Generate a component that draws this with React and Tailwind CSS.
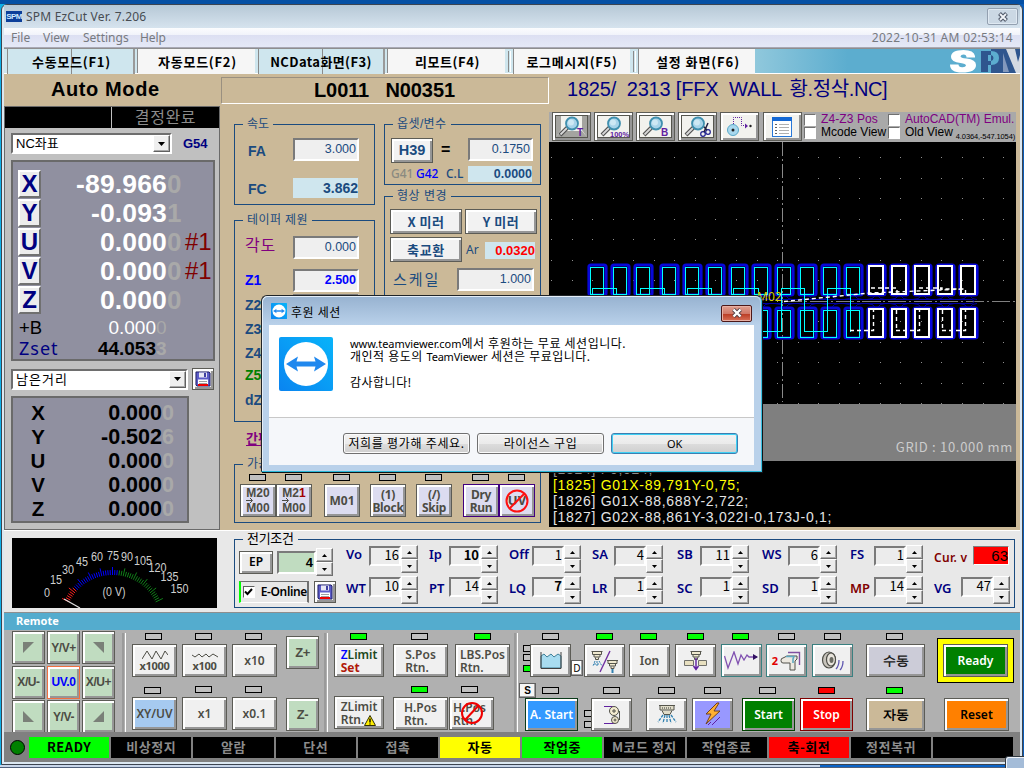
import React from "react";
import { clsx } from "clsx";
import { twMerge } from "tailwind-merge";

const Btn = ({ className, children }) => (
  <div
    className={twMerge(
      "flex shrink-0 items-center justify-center whitespace-nowrap border border-[#5c5c56] shadow-[inset_2px_2px_0_#ffffff,inset_-2px_-2px_0_#969696]",
      className
    )}
  >
    {children}
  </div>
);

const Field = ({ className, children }) => (
  <div
    className={clsx(
      "shrink-0 whitespace-nowrap border-2 border-b-white border-l-[#7a7a7a] border-r-white border-t-[#7a7a7a] text-right",
      className
    )}
  >
    {children}
  </div>
);

const Led = ({ className, on, red }) => (
  <div
    className={clsx(
      "h-[7px] w-[17px] shrink-0 border border-black",
      on ? "bg-[#00ff00]" : red ? "bg-[#ff0000]" : "bg-[#c0c0c0]",
      className
    )}
  />
);

const Group = ({ title, className, legend = "text-[12px]", children }) => (
  <fieldset className={clsx("min-w-0 shrink-0 border border-[#1b4b7f]", className)}>
    <legend className={clsx("ml-2 h-[14px] whitespace-nowrap px-1 leading-[14px]", legend)}>{title}</legend>
    {children}
  </fieldset>
);

const Arrow = ({ up }) => (
  <svg width="5" height="3" viewBox="0 0 5 3">
    <path d={up ? "M0 3L2.5 0L5 3Z" : "M0 0L2.5 3L5 0Z"} fill="#000" />
  </svg>
);

const Spin = () => (
  <div className="flex w-[17px] shrink-0 flex-col">
    <div className="flex h-[14px] items-center justify-center border border-b-[#707070] border-l-white border-r-[#707070] border-t-white bg-[#ececec] shadow-[inset_-1px_-1px_0_#a8a8a8]">
      <Arrow up />
    </div>
    <div className="flex h-[14px] items-center justify-center border border-b-[#707070] border-l-white border-r-[#707070] border-t-white bg-[#ececec] shadow-[inset_-1px_-1px_0_#a8a8a8]">
      <Arrow />
    </div>
  </div>
);

const Disk = () => (
  <svg width="16" height="16" viewBox="0 0 16 16">
    <path d="M1 1h13l1 1v13H2l-1-1z" fill="#5c5cc8" stroke="#20206a" />
    <rect x="4" y="1.5" width="8" height="5" fill="#e8e8f4" />
    <rect x="9" y="2" width="2" height="4" fill="#4040a0" />
    <rect x="3" y="8.5" width="10" height="6" fill="#fff" />
    <path d="M4 10.5h8M4 12.5h8" stroke="#a0a0a0" />
    <rect x="3" y="13" width="10" height="2" fill="#f00000" />
  </svg>
);

const Dropdown = ({ className, children }) => (
  <div
    className={clsx(
      "flex h-[21px] items-stretch justify-between border-2 border-b-white border-l-[#6e6e6e] border-r-white border-t-[#6e6e6e] bg-white",
      className
    )}
  >
    <span className="whitespace-nowrap pl-[3px] text-[13px] leading-[18px] text-black">{children}</span>
    <span className="flex w-[17px] items-center justify-center border border-b-[#606060] border-l-white border-r-[#606060] border-t-white bg-[#efefef] shadow-[inset_-1px_-1px_0_#a8a8a8]">
      <svg width="7" height="4" viewBox="0 0 7 4">
        <path d="M0 0h7L3.5 4z" fill="#000" />
      </svg>
    </span>
  </div>
);

/* ---------- window header ---------- */

const SpmMini = () => (
  <span className="flex h-[11px] w-4 items-center justify-center bg-[#0c3f9a] text-[8px] font-bold leading-[11px] tracking-[-0.6px] text-[#cfeaff]">
    SPM
  </span>
);

const TitleBar = () => (
  <div className="flex h-[23px] shrink-0 items-center bg-gradient-to-b from-[#b6c8d6] to-[#d6e3ee] pl-0.5">
    <SpmMini />
    <span className="ml-1 grow whitespace-nowrap font-['Noto_Sans',sans-serif] text-[12px] leading-[22px] tracking-[0.2px] text-[#474c52]">
      SPM EzCut Ver. 7.206
    </span>
    <span className="mr-[2px] flex h-[17px] w-[31px] items-center justify-center rounded-[2px] border border-[#93a0b0] bg-[#cbd8e4] shadow-[inset_0_0_0_1px_#dfe9f2]">
      <svg width="12" height="10" viewBox="0 0 12 10">
        <path d="M2.500 1.500L9.500 8.500M9.500 1.500L2.500 8.500" stroke="#50596a" strokeWidth="4" />
        <path d="M3 2L9 8M9 2L3 8" stroke="#f2f5f9" strokeWidth="1.800" />
      </svg>
    </span>
  </div>
);

const MenuBar = () => (
  <div className="flex h-5 shrink-0 items-center border-b border-[#a8a8b4] bg-[linear-gradient(#fbfcfe_0,#f1f3fa_7px,#dcdff2_7px,#e4e8f6_18px)] pl-[7px] font-['Noto_Sans',sans-serif] text-[12px] leading-[19px] text-[#777a80]">
    <span className="w-8">File</span>
    <span className="w-10">View</span>
    <span className="w-[57px]">Settings</span>
    <span className="grow tracking-[-0.1px]">Help</span>
    <span className="mr-[7px] tracking-[0.28px]">2022-10-31 AM 02:53:14</span>
  </div>
);

const Tab = ({ className, children }) => (
  <div
    className={clsx(
      "flex h-[25px] shrink-0 items-center justify-center whitespace-nowrap text-[13px] font-bold leading-[24px] text-black",
      className
    )}
  >
    {children}
  </div>
);

const Divider = () => (
  <div className="flex w-2 shrink-0 items-center justify-center bg-[#cfe6ee]">
    <div className="h-[21px] w-[3px] border-l border-r border-l-[#8a8a8a] border-r-white" />
  </div>
);

const TabBar = () => (
  <div className="flex h-[26px] shrink-0 border-b border-t border-b-white border-t-[#8e8e8e] bg-[#cfe6ee] font-['Noto_Sans_CJK_KR',sans-serif]">
    <div className="w-[3px]" />
    <Tab className="w-[128px] border-l border-r-2 border-l-[#8a8a8a] border-r-[#9a9a9a] bg-[linear-gradient(90deg,#cfe6ee_63px,#8a8a8a_63px,#8a8a8a_64px,#cfe6ee_64px)] pl-0.5 tracking-[0.75px]">
      수동모드(F1)
    </Tab>
    <div className="w-[3px] border-r border-r-[#8a8a8a]" />
    <Tab className="w-[117px] bg-[#f6f6f6] pl-0.5 tracking-[0.75px]">자동모드(F2)</Tab>
    <div className="w-[3px]" />
    <Tab className="w-[127px] border-l border-r-2 border-l-[#8a8a8a] border-r-[#9a9a9a] bg-[linear-gradient(90deg,#cfe6ee_63px,#8a8a8a_63px,#8a8a8a_64px,#cfe6ee_64px)] tracking-[0.4px]">
      NCData화면(F3)
    </Tab>
    <div className="w-[3px] border-r border-r-[#8a8a8a]" />
    <Tab className="w-[117px] bg-[#f6f6f6] pl-0.5 tracking-[0.6px]">리모트(F4)</Tab>
    <Divider />
    <Tab className="w-[117px] border-l border-l-[#8a8a8a] bg-[#f6f6f6] tracking-[0.7px]">로그메시지(F5)</Tab>
    <Divider />
    <Tab className="w-[117px] border-l border-l-[#8a8a8a] bg-[#f6f6f6] pl-0.5 tracking-[0.9px]">설정 화면(F6)</Tab>
    <div className="flex grow justify-end overflow-hidden bg-[linear-gradient(90deg,#90c8dc,#5cadcf_35%)]">
      <svg width="71" height="24" viewBox="0 0 71 24">
        <rect x="42" y="0" width="29" height="24" fill="#2f568e" />
        <path
          d="M26 8.500V7Q25 1 14.500 1Q2 1 2 8Q2 13 11.500 14Q17 14.600 17 16.500Q16.500 18.500 13 18.200Q9.500 18 9.500 15.500H1Q1 23.500 13 23.500Q27 23.500 27 16Q27 10.500 17.500 9.500Q11.500 8.900 11.500 7.200Q12 5.500 14.500 5.500Q17.500 5.700 17.500 8.500Z"
          fill="#fff"
        />
        <path d="M32 2H42V6H39V12H42V16H39V23H32Z" fill="#2f568e" />
        <path d="M42 2Q50 2 50 9Q50 16 42 16V12Q44.500 11.500 44.500 9Q44.500 6.500 42 6Z" fill="#5cadcf" />
        <path d="M57 0H66L69 13L71 6V24H67Z" fill="#d4dae2" />
        <path d="M54 4L60 23H54Z" fill="#8298bc" />
      </svg>
    </div>
  </div>
);

const Heading = () => (
  <div className="flex h-8 shrink-0 bg-[#cbb998] text-[20px] font-bold leading-[30px] text-black">
    <div className="w-[217px] whitespace-nowrap pl-[47px] tracking-[0.6px]">Auto Mode</div>
    <div className="mt-[3px] h-[27px] w-[328px] whitespace-pre border border-b-white border-l-[#9a9080] border-r-white border-t-[#9a9080] pl-[92px] leading-[24px] tracking-[-0.1px]">
      {"L0011   N00351"}
    </div>
    <div className="whitespace-pre pl-[18px] font-normal tracking-[-0.2px] text-[#000080]">
      {"1825/  2313 [FFX  WALL "}
      <span className="ml-[3px] tracking-[-0.4px]">황.정삭.NC]</span>
    </div>
  </div>
);

/* ---------- left panel ---------- */

const AXES = [
  ["X", "-89.966", "0", ""],
  ["Y", "-0.093", "1", ""],
  ["U", "0.000", "0", "#1"],
  ["V", "0.000", "0", "#1"],
  ["Z", "0.000", "0", ""],
];

const REMAIN = [
  ["X", "0.000", "0"],
  ["Y", "-0.502", "6"],
  ["U", "0.000", "0"],
  ["V", "0.000", "0"],
  ["Z", "0.000", "0"],
];

const LeftPanel = () => (
  <div className="flex w-[216px] shrink-0 flex-col border border-[#6a6a6a] bg-[#c0c0c0]">
    <div className="flex h-[21px] bg-black">
      <div className="w-[107px] border-r border-[#c0c0c0]" />
      <div className="grow text-center text-[16px] leading-[21px] tracking-[0.6px] text-[#8c8c8c]">결정완료</div>
    </div>
    <div className="ml-1.5 mt-[5px] flex items-center">
      <Dropdown className="w-[161px]">NC좌표</Dropdown>
      <span className="ml-[11px] text-[13px] font-bold text-[#000080]">G54</span>
    </div>
    <div className="ml-1.5 mt-1.5 flex h-[201px] w-[204px] flex-col border-2 border-[#6a6a6a] bg-[#9090a0] pt-[7px]">
      {AXES.map(([axis, v, last, note]) => (
        <div key={axis} className="flex h-[29px] shrink-0 items-center">
          <div className="ml-[5px] flex h-[28px] w-[23px] items-center justify-center border-2 border-b-[#707070] border-l-white border-r-[#707070] border-t-white bg-[#ececec] text-[24px] font-bold leading-[26px] text-[#000080]">
            {axis}
          </div>
          <div className="w-[126px] text-right text-[26.500px] font-bold leading-[28px] tracking-[0.15px] text-white">{v}</div>
          <div className="w-[14px] text-[26px] font-bold leading-[28px] text-[#a9a9a9]">{last}</div>
          <div className="ml-[4px] text-[24px] leading-[28px] text-[#800000]">{note}</div>
        </div>
      ))}
      <div className="mt-[3px] flex h-[21px] shrink-0 items-center text-[19px] leading-[21px]">
        <span className="w-[52px] pl-[6px] text-[18.500px] text-black">+B</span>
        <span className="w-[91px] text-right text-white">0.000</span>
        <span className="text-[#a9a9a9]">0</span>
      </div>
      <div className="flex h-[21px] shrink-0 items-center text-[19px] leading-[21px]">
        <span className="w-[52px] whitespace-nowrap pl-[6px] font-['Noto_Sans',sans-serif] text-[18px] tracking-[1px] text-[#000080]">Zset</span>
        <span className="w-[91px] text-right font-bold text-black">44.053</span>
        <span className="font-bold text-[#a9a9a9]">3</span>
      </div>
    </div>
    <div className="ml-1.5 mt-[7px] flex items-center">
      <Dropdown className="w-[177px] tracking-[1px]">남은거리</Dropdown>
      <Btn className="ml-1 h-[22px] w-[22px] bg-[#ececec]">
        <Disk />
      </Btn>
    </div>
    <div className="ml-1.5 mt-[6px] flex h-[127px] w-[178px] flex-col border-2 border-[#6a6a6a] bg-[#9090a0] pt-[3px]">
      {REMAIN.map(([axis, v, last]) => (
        <div key={axis} className="flex h-6 shrink-0 items-center font-bold leading-6">
          <span className="w-[32px] pl-[17px] text-[20.500px] text-black">
            <span className="flex w-4 justify-center">{axis}</span>
          </span>
          <span className="w-[117px] text-right text-[21.500px] text-black">{v}</span>
          <span className="text-[21.500px] text-[#a9a9a9]">{last}</span>
        </div>
      ))}
    </div>
  </div>
);

/* ---------- machining parameters ---------- */

const MachineBtn = ({ ml, purple, children }) => (
  <div className={clsx("flex flex-col items-center gap-[3px]", ml)}>
    <Led className="mr-px" />
    <Btn
      className={clsx(
        "h-[33px] w-9 bg-[#dcdcf0] text-center font-['Noto_Sans',sans-serif] text-[12px] font-bold leading-[13px] text-[#4c4c44]",
        purple && "border-[#400080]"
      )}
    >
      {children}
    </Btn>
  </div>
);

const MArrow = ({ to }) => (
  <span className="flex flex-col items-start font-['Liberation_Sans'] text-[12px]">
    <span className="h-3 leading-3">{to}</span>
    <svg width="8" height="5" viewBox="0 0 8 5" className="-my-px">
      <path d="M0 2.500H6M4 0L6.500 2.500L4 5" stroke="#4c4c44" fill="none" />
    </svg>
    <span className="h-3 leading-3">M00</span>
  </span>
);

const ZLabel = ({ className, children }) => (
  <div className={clsx("pl-[10px] text-[14px] font-bold", className)}>{children}</div>
);

const Middle = () => (
  <div className="flex w-[329px] shrink-0 flex-col bg-[#cbb998] pl-[14px] pt-[11px] text-[#1b4b7f]">
    <div className="flex h-[312px] gap-[9px]">
      <div className="flex w-[141px] flex-col">
        <Group title="속도" className="h-[88px]">
          <div className="mt-[7px] flex h-[23px] items-center">
            <span className="w-[58px] pl-[13px] pt-1 text-[14px] font-bold">FA</span>
            <Field className="h-[23px] w-[66px] bg-[#efefef] pr-px text-[12.500px] leading-[18px]">3.000</Field>
          </div>
          <div className="mt-[17px] flex h-5 items-center">
            <span className="w-[58px] pl-[13px] pt-0.5 text-[14px] font-bold">FC</span>
            <div className="h-5 w-[65px] bg-[#cfe6ee] text-right text-[14px] font-bold leading-[20px]">3.862</div>
          </div>
        </Group>
        <Group title="테이퍼 제원" legend="text-[12px] tracking-[0.4px]" className="mt-[8px] h-[209px]">
          <div className="mt-[9px] flex h-[23px] items-center">
            <span className="w-[58px] pb-1 pl-[10px] text-[16px] leading-[16px] tracking-[0.8px] text-[#800080]">각도</span>
            <Field className="h-[23px] w-[66px] bg-[#efefef] pr-px text-[12.500px] leading-[18px]">0.000</Field>
          </div>
          <div className="mt-[10px] flex h-[23px] items-center text-[#0000ff]">
            <span className="w-[58px] pl-[10px] text-[14px] font-bold">Z1</span>
            <Field className="h-[23px] w-[66px] bg-[#efefef] pr-px text-[12.500px] font-bold leading-[18px]">2.500</Field>
          </div>
          <div className="mt-[1px] flex h-6 items-center">
            <ZLabel className="w-[58px]">Z2</ZLabel>
            <Field className="h-[23px] w-[66px] bg-[#efefef]" />
          </div>
          <ZLabel className="h-6 leading-6">Z3</ZLabel>
          <ZLabel className="h-6 leading-6">Z4</ZLabel>
          <ZLabel className="h-5 leading-5 text-[#008000]">Z5</ZLabel>
          <ZLabel className="h-7 leading-[30px]">dZ</ZLabel>
        </Group>
      </div>
      <div className="flex w-[157px] flex-col">
        <Group title="옵셋/변수" className="h-[68px]" legend="text-[12px] tracking-[0.4px]">
          <div className="mt-[7px] flex h-[25px] items-start pl-[6px]">
            <Btn className="h-[25px] w-[42px] bg-[#f2f2f2] text-[14.500px] font-bold">H39</Btn>
            <span className="w-[35px] pl-[8px] text-[16px] font-bold leading-6 text-black">=</span>
            <Field className="h-[23px] w-[65px] bg-[#efefef] pr-px text-[12.500px] leading-[19px]">0.1750</Field>
          </div>
          <div className="mt-[3px] flex h-4 items-center pl-[6px] font-['Noto_Sans',sans-serif] text-[12px] font-medium leading-[18px]">
            <span className="w-[25px] text-[#8a8a80]">G41</span>
            <span className="w-[30px] text-[#0000ff]">G42</span>
            <span className="w-[22px]">C.L</span>
            <div className="h-4 w-[64px] bg-[#cfe6ee] text-right font-['Liberation_Sans'] text-[12.500px] font-bold leading-4">0.0000</div>
          </div>
        </Group>
        <Group title="형상 변경" legend="text-[12px] tracking-[0.5px]" className="mt-1 h-[232px]">
          <div className="mt-[6px] flex gap-[3px] pl-[5px] font-['Noto_Sans_CJK_KR',sans-serif] text-[13px] font-bold leading-[20px] tracking-[0.5px]">
            <Btn className="h-[25px] w-[72px] bg-[#f2f2f2]">X 미러</Btn>
            <Btn className="h-[25px] w-[72px] bg-[#f2f2f2]">Y 미러</Btn>
          </div>
          <div className="mt-[3px] flex items-center pl-[5px]">
            <Btn className="h-[25px] w-[72px] bg-[#f2f2f2] font-['Noto_Sans_CJK_KR',sans-serif] text-[13px] font-bold leading-[20px] tracking-[0.7px]">
              축교환
            </Btn>
            <span className="w-[23px] pl-1 font-['Noto_Sans',sans-serif] text-[12px]">Ar</span>
            <div className="mt-0.5 h-[17px] w-[50px] bg-[#cfe6ee] text-right text-[13px] font-bold leading-[17px] text-[#ff0000]">0.0320</div>
          </div>
          <div className="mt-[6px] flex h-[23px] items-center">
            <span className="w-[72px] whitespace-nowrap pl-[8px] text-[15px] leading-[20px] tracking-[2px]">스케일</span>
            <Field className="h-[23px] w-[77px] bg-[#efefef] pr-px text-[12.500px] leading-[18px]">1.000</Field>
          </div>
        </Group>
      </div>
    </div>
    <div className="mt-[3px] h-[13px] pl-3 text-[13px] font-bold leading-[13px] text-[#800080] underline underline-offset-2">간편입력</div>
    <Group title="가공조건" className="mt-[12px] h-[66px] w-[307px]">
      <div className="mt-[3px] flex pl-[5px]">
        <MachineBtn>
          <MArrow to="M20" />
        </MachineBtn>
        <MachineBtn>
          <MArrow
            to={
              <>
                M2<span className="text-[#a00000]">1</span>
              </>
            }
          />
        </MachineBtn>
        <MachineBtn ml="ml-3">M01</MachineBtn>
        <MachineBtn ml="ml-[10px]">
          <span className="tracking-[-0.3px]">
            (1)
            <br />
            Block
          </span>
        </MachineBtn>
        <MachineBtn ml="ml-[10px]">
          <span className="tracking-[-0.3px]">
            (/)
            <br />
            Skip
          </span>
        </MachineBtn>
        <MachineBtn ml="ml-[11px]" purple>
          <span className="tracking-[-0.3px]">
            Dry
            <br />
            Run
          </span>
        </MachineBtn>
        <MachineBtn purple>
          <span className="relative text-[13px]">
            UV
            <svg className="absolute -left-[3px] -top-[5px]" width="24" height="24" viewBox="0 0 24 24">
              <circle cx="12" cy="12" r="10.500" fill="none" stroke="#ff1010" strokeWidth="2" />
              <path d="M19.500 4.500L4.500 19.500" stroke="#ff1010" strokeWidth="2" />
            </svg>
          </span>
        </MachineBtn>
      </div>
    </Group>
  </div>
);

/* ---------- drawing view ---------- */

const Lens = ({ children }) => (
  <svg width="33" height="23" viewBox="0 0 33 23">
    <path d="M0 0.500H33M0 22.500H33M0.500 0V23M32.500 0V23" stroke="#55554e" fill="none" />
    {children}
    <path d="M5 20L13 12" stroke="#505050" strokeWidth="4" />
    <path d="M5.500 19.500L12 13" stroke="#d8d8d8" strokeWidth="1.800" />
    <circle cx="17" cy="8.500" r="6" fill="#a8d4ea" stroke="#3f8fae" strokeWidth="1.800" />
    <circle cx="16" cy="7.500" r="3" fill="#cde8f4" />
  </svg>
);

const ViewBtn = ({ children, className }) => (
  <Btn className={clsx("h-[29px] w-[39px] bg-[#f2f2ee]", className)}>{children}</Btn>
);

const Check = ({ children, labelClass }) => (
  <div className="flex h-[13px] items-center">
    <span className="h-[12px] w-[12px] shrink-0 border border-b-white border-l-[#707070] border-r-white border-t-[#707070] bg-white" />
    <span className={clsx("ml-[5px] whitespace-nowrap text-[12px] leading-[13px]", labelClass)}>{children}</span>
  </div>
);

const Tag = ({ x, children }) => (
  <text x={x} y="21" fontSize="10" fontWeight="bold" fill="#6020a0" fontFamily="Liberation Sans">
    {children}
  </text>
);

const Toolbar = () => (
  <div className="flex h-[30px] shrink-0 bg-[#a9a9a9] pl-[3px]">
    <div className="flex gap-[3px]">
      <ViewBtn>
        <Lens>
          <path d="M1 1H6V15L1 22ZM27 1H32V22L27 15ZM1 22L6 16H27L32 22Z" fill="#a4a4a0" />
          <Tag x={22}>T</Tag>
        </Lens>
      </ViewBtn>
      <ViewBtn>
        <Lens>
          <text x="13" y="21.500" fontSize="7.500" fontWeight="bold" fill="#6020a0" fontFamily="Liberation Sans">
            100%
          </text>
        </Lens>
      </ViewBtn>
      <ViewBtn>
        <Lens>
          <Tag x={22}>B</Tag>
        </Lens>
      </ViewBtn>
      <ViewBtn>
        <Lens>
          <circle cx="22" cy="19" r="2.300" fill="none" stroke="#202090" strokeWidth="1.200" />
          <circle cx="27" cy="17" r="2.300" fill="none" stroke="#202090" strokeWidth="1.200" />
          <path d="M23 17L27 8M26 15L21 10" stroke="#202040" strokeWidth="1.500" />
        </Lens>
      </ViewBtn>
      <ViewBtn>
        <svg width="33" height="23" viewBox="0 0 33 23">
          <circle cx="10" cy="15" r="5.500" fill="#a8d8ee" stroke="#58a8c8" />
          <circle cx="10" cy="15" r="1.500" fill="#202020" />
          <path d="M10.500 9V2.500H18.500V10.500H22" stroke="#6020a0" strokeDasharray="1 1" fill="none" />
          <path d="M22 8.500L25 11L22 13.500Z" fill="#6020a0" />
          <circle cx="27.500" cy="11" r="1.200" fill="#202020" />
        </svg>
      </ViewBtn>
      <ViewBtn className="ml-px">
        <svg width="21" height="20" viewBox="0 0 21 20">
          <rect x="0.500" y="0.500" width="19" height="19" fill="#fff" stroke="#2878d8" />
          <rect x="0" y="0" width="20" height="4" fill="#1468d4" />
          <path d="M3 7.500H5M3 10.500H5M3 13.500H5M3 16.500H5" stroke="#606060" />
          <path d="M7 7.500H17M7 10.500H17M7 13.500H17M7 16.500H17" stroke="#b0b0b0" />
        </svg>
      </ViewBtn>
    </div>
    <div className="ml-[2px] w-[84px] pt-px">
      <Check labelClass="tracking-[0.1px] text-[#800080]">Z4-Z3 Pos</Check>
      <Check labelClass="text-black">Mcode View</Check>
    </div>
    <div className="pt-px">
      <Check labelClass="text-[#800080]">AutoCAD(TM) Emul.</Check>
      <div className="flex">
        <Check labelClass="text-black">Old View</Check>
        <span className="ml-[3px] mt-[6px] whitespace-nowrap text-[7.500px] leading-[9px] tracking-[-0.12px] text-black">4.0364,-547.1054)</span>
      </div>
    </div>
  </div>
);

const COLS = [590, 613, 636, 662, 685, 708, 731, 754, 777, 800, 823, 846, 869, 892, 915, 938, 961];
const DOT_X = Array.from({ length: 23 }, (_, i) => 551 + Math.round(i * 20.55));
const DOT_Y = Array.from({ length: 13 }, (_, i) => 157 + Math.round(i * 20.5));

const Cad = () => (
  <svg className="block shrink-0 bg-black" width="467" height="262" viewBox="549 142 467 262">
    <g fill="#909090" shapeRendering="crispEdges">
      {DOT_Y.map((y) => DOT_X.map((x) => <rect key={x + "-" + y} x={x} y={y} width="1" height="1" />))}
    </g>
    <path d="M782.500 142V402" stroke="#8a8a8a" strokeDasharray="14 3 2 3" />
    <path d="M784 301.500H1016" stroke="#808080" strokeDasharray="18 3 2 3" />
    <g fill="none">
      {COLS.map((x) => (
        <g key={x} stroke="#0808d8">
          <rect x={x - 1} y="265" width="17" height="30" rx="2" strokeWidth="3.200" />
          <rect x={x - 1} y="308" width="17" height="30" rx="2" strokeWidth="3.200" />
          <path
            d={`M${x + 9} 296Q${x + 11} 299.500 ${x + 16} 299.500M${x + 6} 296Q${x + 4} 299.500 ${x - 2} 299.500M${x + 9} 307Q${x + 11} 303.500 ${x + 16} 303.500M${x + 6} 307Q${x + 4} 303.500 ${x - 2} 303.500`}
            stroke="#0000a8"
          />
        </g>
      ))}
      <path d="M740 299.500H972Q976 301.500 972 303.500H740" stroke="#0000a8" />
    </g>
    <g fill="none" stroke="#00ffff" shapeRendering="crispEdges">
      {COLS.slice(0, 12).map((x) => (
        <g key={x}>
          <rect x={x + 0.5} y="267.500" width="13" height="27" />
          <rect x={x + 0.5} y="310.500" width="13" height="27" />
        </g>
      ))}
      <path d="M592.500 294V288.500H616.500V294M640.500 294V288.500H664.500V294M687.500 294V288.500H711.500V294M733.500 294V288.500H758.500V331.500H781.500V288.500H804.500V331.500H827.500V288.500H850.500V331.500" />
    </g>
    <g fill="none" stroke="#fff" strokeWidth="2" shapeRendering="crispEdges">
      {COLS.slice(12).map((x) => (
        <g key={x}>
          <rect x={x} y="266" width="14" height="28" />
          <rect x={x} y="309" width="14" height="28" />
        </g>
      ))}
    </g>
    <g fill="none" stroke="#fff" strokeWidth="1.400" strokeDasharray="4 3">
      <path d="M850 330.500H873.500V310M896 330.500H919.500V310M942 330.500H965.500V310M871 288H897V294M919 288H942V294M965.500 294V289H940" />
      <path d="M896.500 310V330M942.500 310V330M784 301.500L870 293L965 289" />
    </g>
    <text x="757" y="301" fontSize="12" fill="#d8d000" fontFamily="Noto Sans">
      M02
    </text>
  </svg>
);

const CodeLine = ({ className, children }) => (
  <div className={clsx("h-4 whitespace-nowrap", className)}>{children}</div>
);

const Viewer = () => (
  <div className="flex grow flex-col bg-[#cbb998] pr-1 pt-1.5">
    <Toolbar />
    <Cad />
    <div className="flex h-[57px] shrink-0 items-end justify-end bg-[#7f7f7f] pb-[5px] pr-[3px] font-['Noto_Sans_CJK_KR',sans-serif] text-[13px] leading-[18px] tracking-[0.7px] text-[#cccccc]">
      GRID : 10.000 mm
    </div>
    <div className="flex h-[66px] shrink-0 flex-col justify-end overflow-hidden bg-black pb-[2px] pl-1 text-[14px] leading-4 tracking-[0.7px] text-[#e4e4e4]">
      <CodeLine className="text-[#8c8c8c]">[1824] F0,024;</CodeLine>
      <CodeLine className="text-[#ffff00]">[1825] G01X-89,791Y-0,75;</CodeLine>
      <CodeLine>[1826] G01X-88,688Y-2,722;</CodeLine>
      <CodeLine>[1827] G02X-88,861Y-3,022I-0,173J-0,1;</CodeLine>
    </div>
  </div>
);

/* ---------- electrical conditions ---------- */

const METER_LABELS = [
  ["0", 47, 593], ["15", 56, 580], ["30", 68, 570], ["45", 82, 562], ["60", 97, 557], ["75", 113, 556],
  ["90", 127, 557], ["105", 143, 561], ["120", 157.5, 568], ["135", 169.5, 577], ["150", 179.5, 589],
];

const TICKS = Array.from({ length: 51 }, (_, i) => {
  const a = ((-64 + (128 * i) / 50) * Math.PI) / 180;
  const outer = i % 5 === 0 ? 56 : 53;
  return {
    x1: 112.5 + Math.sin(a) * 48,
    y1: 623 - Math.cos(a) * 48,
    x2: 112.5 + Math.sin(a) * outer,
    y2: 623 - Math.cos(a) * outer,
    color: i < 7 ? "#ff2020" : i < 28 ? "#0000ff" : "#108018",
  };
});

const Meter = () => (
  <svg className="ml-2 mt-[7px] block shrink-0 bg-black" width="205" height="70" viewBox="12 538 205 70">
    {TICKS.map((t, i) => (
      <line key={i} x1={t.x1} y1={t.y1} x2={t.x2} y2={t.y2} stroke={t.color} />
    ))}
    <path d="M64 599L80 608" stroke="#e0e0e0" strokeWidth="1.200" />
    <g fill="#cfcfcf" fontSize="12.500" fontFamily="Liberation Sans" textAnchor="middle">
      {METER_LABELS.map(([t, x, y]) => (
        <text key={t} x={x} y={y + 4} textLength={t.length * 6} lengthAdjust="spacingAndGlyphs">
          {t}
        </text>
      ))}
      <text x="114" y="596" textLength="23" lengthAdjust="spacingAndGlyphs">
        (0 V)
      </text>
    </g>
  </svg>
);

const ROW1 = [
  ["Vo", "16", "w-[83px]", "w-[23px]"],
  ["Ip", "10", "w-[80px]", "w-[20px]", true],
  ["Off", "1", "w-[83px]", "w-[23px]"],
  ["SA", "4", "w-[85px]", "w-[22px]"],
  ["SB", "11", "w-[85px]", "w-[23px]"],
  ["WS", "6", "w-[88px]", "w-[26px]"],
  ["FS", "1", "w-[84px]", "w-[24px]"],
];
const ROW2 = [
  ["WT", "10", "w-[83px]", "w-[23px]"],
  ["PT", "14", "w-[80px]", "w-[20px]"],
  ["LQ", "7", "w-[83px]", "w-[23px]", true],
  ["LR", "1", "w-[85px]", "w-[22px]"],
  ["SC", "1", "w-[85px]", "w-[23px]"],
  ["SD", "1", "w-[88px]", "w-[26px]"],
  ["MP", "14", "w-[84px]", "w-[24px]"],
  ["VG", "47", "w-[77px]", "w-[27px]"],
];

const Param = ({ p, low }) => (
  <div className={clsx("flex h-[28px] items-start", p[2])}>
    <span
      className={clsx(
        "whitespace-nowrap font-['Noto_Sans',sans-serif] text-[13px] font-semibold leading-[18px]",
        low && "pt-[3px]",
        p[0] === "MP" ? "text-[#800000]" : "text-[#000080]",
        p[3]
      )}
    >
      {p[0]}
    </span>
    <Field className={clsx("mt-px h-[20px] w-8 bg-[#ececec] font-['Noto_Sans_CJK_KR',sans-serif] text-[13px] leading-[14px] text-black", p[4] && "font-bold")}>
      {p[1]}
    </Field>
    <Spin />
  </div>
);

const Electric = () => (
  <div className="flex h-[83px] shrink-0 border-b border-t border-b-[#8e8e8e] border-t-white bg-[#e8e8e8] text-black">
    <Meter />
    <Group title="전기조건" className="ml-[17px] mt-px h-[76px] w-[781px]" legend="text-[13px] tracking-[-0.3px]">
      <div className="flex">
        <div className="ml-1 mt-[2px] w-[98px]">
          <div className="flex h-[28px] items-center">
            <Btn className="h-[23px] w-[34px] bg-[#ececec] font-['Noto_Sans',sans-serif] text-[12px] font-semibold leading-[16px]">EP</Btn>
            <Field className="ml-1 h-[23px] w-[39px] bg-[#c0dcc0] pr-px text-[13px] font-bold leading-[20px]">4</Field>
            <div>
              <Spin />
            </div>
          </div>
          <div className="mt-[5px] flex">
            <div className="flex h-[22px] w-[70px] items-center border-b border-l-2 border-r-2 border-t border-b-white border-l-[#00ff00] border-r-[#707070] border-t-[#707070]">
              <span className="ml-[2px] flex h-3 w-3 items-center justify-center border border-b-white border-l-[#606060] border-r-white border-t-[#606060] bg-white">
                <svg width="9" height="8" viewBox="0 0 9 8">
                  <path d="M1 3.500L3.500 6L8 1" stroke="#000" strokeWidth="2" fill="none" />
                </svg>
              </span>
              <span className="ml-[6px] whitespace-nowrap font-['Noto_Sans',sans-serif] text-[12px] font-semibold leading-4 tracking-[-0.35px]">E-Online</span>
            </div>
            <Btn className="ml-[5px] h-[22px] w-[22px] bg-[#ececec]">
              <Disk />
            </Btn>
          </div>
        </div>
        <div className="-mt-px ml-[9px] w-[666px]">
          <div className="flex">
            {ROW1.map((p) => (
              <Param key={p[0]} p={p} />
            ))}
            <span className="w-[39px] whitespace-nowrap pt-[5px] font-['Noto_Sans',sans-serif] text-[12px] font-semibold leading-4 tracking-[0.3px] text-[#800000]">Cur. v</span>
            <div className="mt-[1px] h-[19px] w-9 border border-b-white border-l-[#808080] border-r-white border-t-[#808080] bg-[#ff0000] text-right text-[15px] leading-[18px]">63</div>
          </div>
          <div className="mt-[3px] flex">
            {ROW2.map((p) => (
              <Param key={p[0]} p={p} low />
            ))}
          </div>
        </div>
      </div>
    </Group>
  </div>
);

/* ---------- remote panel ---------- */

const Key = ({ className, children }) => (
  <Btn className={twMerge("h-[33px] w-[33px] bg-[#c0dcc0] text-[12px] font-bold tracking-[-0.4px] text-[#4c4c44]", className)}>
    {children}
  </Btn>
);

const Tri = ({ d }) => (
  <svg width="11" height="11" viewBox="0 0 11 11">
    <path d={d} fill="#7a8078" />
  </svg>
);

const Cell = ({ led = "off", className, shift, children }) => (
  <div className={clsx("flex h-11 shrink-0 flex-col items-center justify-between", className)}>
    {led === "none" ? <span /> : <Led on={led === "on"} red={led === "red"} className={shift} />}
    {children}
  </div>
);

const RBtn = ({ className, children }) => (
  <Btn
    className={twMerge(
      "h-[33px] bg-[#f0f0f0] font-['Noto_Sans',sans-serif] text-[12px] font-semibold leading-[13px] text-[#4c4c44]",
      className
    )}
  >
    {children}
  </Btn>
);

const Sep = ({ className }) => (
  <div className={clsx("h-[100px] w-1 shrink-0 border-l-2 border-r border-l-[#9a9a9a] border-r-white", className)} />
);

const Ban = () => (
  <svg className="absolute left-[10px] top-[3px]" width="24" height="24" viewBox="0 0 24 24">
    <circle cx="12" cy="12" r="10" fill="none" stroke="#f00000" strokeWidth="2" />
    <path d="M18.500 4.500L5 19" stroke="#f00000" strokeWidth="2" />
  </svg>
);

const Nozzle = ({ x = 0, y = 0, color = "#f0ead0" }) => (
  <g transform={`translate(${x} ${y})`}>
    <path d="M0 0.500H11M1 1V3.500H10V1M2.500 4V6H8.500V4M4 6.500V8.500H7V6.500" fill={color} stroke="#55554c" />
  </g>
);

const Keypad = () => (
  <div className="ml-2 mt-px grid h-[101px] w-[104px] shrink-0 grid-cols-[33px_33px_33px] grid-rows-[33px_33px_32px] gap-x-[2px] gap-y-[1.500px] overflow-hidden">
    <Key><Tri d="M0 0H11L0 11Z" /></Key>
    <Key>Y/V+</Key>
    <Key><Tri d="M0 0H11V11Z" /></Key>
    <Key>X/U-</Key>
    <Key className="border-[#f07040] text-[#0000ff]">UV.0</Key>
    <Key>X/U+</Key>
    <Key><Tri d="M0 0V11H11Z" /></Key>
    <Key>Y/V-</Key>
    <Key><Tri d="M11 0V11H0Z" /></Key>
  </div>
);

const Remote = () => (
  <div className="flex h-[102px] shrink-0 overflow-hidden bg-[#b0b0b0]">
    <Keypad />
    <Sep className="ml-[6px] mt-[3px]" />
    <div className="ml-[6px] mt-[3px] flex w-[150px] flex-col gap-[9px]">
      <div className="flex gap-[5px]">
        <Cell shift="mr-0.5">
          <RBtn className="w-[45px] flex-col">
            <svg width="26" height="10" viewBox="0 0 26 10">
              <path d="M0 9L5 1L10 9L14 1L19 9L23 1L26 5" stroke="#4c4c44" fill="none" />
            </svg>
            <span className="text-[11px] font-bold leading-[12px] tracking-[-0.3px]">x1000</span>
          </RBtn>
        </Cell>
        <Cell shift="mr-0.5">
          <RBtn className="w-[45px] flex-col">
            <svg width="26" height="10" viewBox="0 0 26 10">
              <path d="M0 5L3 7L7 4L10 7L14 4L17 7L21 4L26 7" stroke="#4c4c44" fill="none" />
            </svg>
            <span className="text-[11px] font-bold leading-[12px] tracking-[-0.3px]">x100</span>
          </RBtn>
        </Cell>
        <Cell shift="mr-0.5"><RBtn className="w-[45px]">x10</RBtn></Cell>
      </div>
      <div className="flex gap-[5px]">
        <Cell shift="mt-px mr-1"><RBtn className="w-[45px] bg-[#a6caf0]">XY/UV</RBtn></Cell>
        <Cell shift="mr-0.5"><RBtn className="w-[45px]">x1</RBtn></Cell>
        <Cell shift="mr-0.5"><RBtn className="w-[45px]">x0.1</RBtn></Cell>
      </div>
    </div>
    <div className="ml-1 mt-1.5 flex flex-col gap-[29px]">
      <Key className="text-[13px]">Z+</Key>
      <Key className="text-[13px]">Z-</Key>
    </div>
    <Sep className="ml-[5px] mt-[3px]" />
    <div className="ml-[6px] mt-[3px] flex w-[180px] flex-col gap-[9px] text-left">
      <div className="flex">
        <Cell led="on" className="mr-[9px]" shift="mr-px">
          <RBtn className="w-[50px]">
            <span className="text-[#204820]"><span className="text-[#0000ff]">Z</span>Limit<br /><span className="font-bold text-[#b01808]">Set</span></span>
          </RBtn>
        </Cell>
        <Cell className="mr-[7px]" shift="mr-0.5"><RBtn className="w-[55px]"><span>S.Pos<br />Rtn.</span></RBtn></Cell>
        <Cell led="on"><RBtn className="w-[55px]"><span>LBS.Pos<br />Rtn.</span></RBtn></Cell>
      </div>
      <div className="flex">
        <Cell led="none" className="mr-[9px]">
          <RBtn className="mb-px w-[50px]">
            <span>
              ZLimit<br />
              <span className="flex items-end">Rtn.
                <svg width="12" height="11" viewBox="0 0 12 11">
                  <path d="M6 0.500L11.500 10.500H0.500Z" fill="#ffee00" stroke="#303000" />
                  <path d="M6 3.500V7.500M6 8.500V9.500" stroke="#000" strokeWidth="1.400" />
                </svg>
              </span>
            </span>
          </RBtn>
        </Cell>
        <Cell led="on" className="mr-px" shift="mr-0.5"><RBtn className="w-[55px]"><span>H.Pos<br />Rtn.</span></RBtn></Cell>
        <Cell shift="mr-1">
          <RBtn className="relative w-[45px]"><span className="-ml-1">H.Pos<br />Rtn.</span><Ban /></RBtn>
        </Cell>
      </div>
    </div>
    <Sep className="mt-[3px]" />
    <div className="relative flex flex-col">
      <div className="mt-[3px] flex">
        <div className="ml-[5px] mt-3 flex flex-col gap-[2px]">
          <div className="h-[7px] w-[7px] border border-r-0 border-black bg-[#c0c0c0]" />
          <div className="h-[7px] w-[7px] border border-r-0 border-black bg-[#c0c0c0]" />
          <div className="mt-[2px] h-[7px] w-[7px] border border-r-0 border-black bg-[#00ff00]" />
        </div>
        <Cell>
          <RBtn className="w-[41px]">
            <svg width="22" height="17" viewBox="0 0 22 17">
              <path d="M1 4L4 2L7 5L11 2L14 5L18 2L21 4V16H1Z" fill="#a8dcf0" stroke="#408098" />
              <path d="M1 0V16.500H21V0" stroke="#404040" fill="none" />
            </svg>
          </RBtn>
        </Cell>
        <div className="mt-[27px] flex h-4 w-[12px] items-center justify-center border border-[#606060] bg-white font-['Noto_Sans',sans-serif] text-[10px] leading-4 text-black shadow-[inset_-1px_-1px_0_#a0a0a0]">D</div>
        <Cell led="on" className="ml-px">
          <RBtn className="w-[41px]">
            <svg width="28" height="24" viewBox="0 0 28 24">
              <Nozzle x={0.5} y={2} />
              <path d="M4 12L2 17M6 12V18M8 12L11 17M3 15H9" stroke="#3080b0" strokeDasharray="2 1" />
              <path d="M19 2L9 23" stroke="#7030a0" strokeWidth="1.400" />
              <Nozzle x={16} y={11} />
              <path d="M21.500 20V24" stroke="#3080b0" strokeWidth="2" />
            </svg>
          </RBtn>
        </Cell>
        <Cell led="on" className="ml-1" shift="mr-0.5"><RBtn className="w-[41px]">Ion</RBtn></Cell>
        <Cell led="on" className="ml-[5px]">
          <RBtn className="w-[41px]">
            <svg width="24" height="21" viewBox="0 0 24 21">
              <Nozzle x={6.5} y={1} />
              <path d="M0.500 10.500H9.500V15.500H0.500ZM14.500 10.500H22.500V15.500H14.500Z" fill="#e8e0c0" stroke="#70706a" />
              <path d="M12 8V18M9.500 16L12 19.500L14.500 16" stroke="#6020a0" strokeWidth="1.400" fill="none" />
            </svg>
          </RBtn>
        </Cell>
        <Cell led="on" className="ml-[5px]" shift="mr-0.5">
          <RBtn className="w-[41px] border-[#3a8080]">
            <svg width="35" height="19" viewBox="0 0 35 19">
              <path d="M0.500 5L4 17L10 1L14 13L17 4L20 9L23 4L25 6H33" stroke="#8050b0" fill="none" strokeWidth="1.300" />
              <path d="M29 3L34 6L29 9Z" fill="#301060" />
            </svg>
          </RBtn>
        </Cell>
        <Cell className="ml-1">
          <RBtn className="w-[41px] border-[#3a8080]">
            <span className="text-[11px] font-bold text-[#e00000]">2</span>
            <svg width="21" height="20" viewBox="0 0 21 20" className="ml-0.5">
              <path d="M8 1.500H19.500V14" stroke="#8050a0" fill="none" strokeWidth="1.400" />
              <path d="M3 7Q1 7 1 9.500Q1 12 3 12H10V19H15V10L17 8V5H7Z" fill="#ece8e0" stroke="#50504a" />
              <path d="M6 5.500H14L13 8V12" fill="none" stroke="#60a8c0" strokeWidth="1.600" />
            </svg>
          </RBtn>
        </Cell>
        <Cell className="ml-[5px]">
          <RBtn className="w-[41px] border-[#3a8080]">
            <svg width="23" height="20" viewBox="0 0 23 20">
              <ellipse cx="8" cy="9" rx="6.500" ry="8" fill="#c8c4bc" stroke="#50504a" strokeWidth="1.200" />
              <ellipse cx="10" cy="8.500" rx="4.500" ry="6.500" fill="#e8e4dc" stroke="#50504a" strokeWidth="1.200" />
              <ellipse cx="10.500" cy="9" rx="2" ry="3" fill="#6a6a62" />
              <path d="M15 18Q18 15 18 9M19 19Q22 16 22 10" stroke="#6058b0" fill="none" strokeWidth="1.300" />
            </svg>
          </RBtn>
        </Cell>
        <Cell className="ml-[13px]" shift="mr-0.5">
          <RBtn className="w-[59px] bg-[#ccccd8] text-[13px] font-bold text-[#202020]">수동</RBtn>
        </Cell>
        <div className="ml-3 mt-[5px] flex h-[45px] w-[77px] items-center justify-center border border-black bg-[#ffff00]">
          <RBtn className="w-[65px] bg-[#008000] text-white">Ready</RBtn>
        </div>
      </div>
      <div className="absolute left-px top-[53px] flex h-[15px] w-[17px] items-center justify-center border border-[#606060] bg-[#f6f6f6] text-[10px] font-bold leading-3 text-black shadow-[inset_-1px_-1px_0_#a0a0a0]">S</div>
      <div className="mt-1 flex pl-[7px]">
        <Cell shift="-ml-[2px]">
          <RBtn className="w-[53px] border-[#0a3a1a] bg-[#3399ff] text-white">A. Start</RBtn>
        </Cell>
        <div className="ml-1.5 mt-[23px] flex flex-col gap-[4px]">
          <div className="h-[7px] w-[7px] border border-r-0 border-black bg-[#c0c0c0]" />
          <div className="h-[7px] w-[7px] border border-r-0 border-black bg-[#c0c0c0]" />
        </div>
        <Cell>
          <RBtn className="w-[41px]">
            <svg width="18" height="20" viewBox="0 0 18 20">
              <path d="M1 1.500H10M1 18.500H12" stroke="#6020a0" />
              <circle cx="11" cy="6" r="4.500" fill="#f4ecd0" stroke="#505048" />
              <circle cx="12" cy="15" r="3.500" fill="#f4ecd0" stroke="#505048" />
              <path d="M16.500 6V15M11 4V8M9 6H13M10.500 15H13.500M12 13.500V16.500" stroke="#505048" />
            </svg>
          </RBtn>
        </Cell>
        <Cell className="ml-[14px]">
          <RBtn className="w-[41px]">
            <svg width="22" height="21" viewBox="0 0 22 21">
              <path d="M3 1.500H19M4 2V6H18V2M6 6.500L8 10.500H14L16 6.500" fill="#e0dcc8" stroke="#55554c" />
              <path d="M6 4H16" stroke="#88887c" strokeDasharray="1 1" strokeWidth="2" />
              <path d="M7 11L2 18M9 11L7 19M11 11V19M13 11L15 19M15 11L20 18" stroke="#3080b0" strokeWidth="1.300" strokeDasharray="3 1" />
            </svg>
          </RBtn>
        </Cell>
        <Cell className="ml-[5px]">
          <RBtn className="w-[41px] bg-[#9898ff]">
            <svg width="20" height="25" viewBox="0 0 20 25">
              <path d="M14 1L3 12H8L3 22L17 9H11L16 1Z" fill="#ffb030" stroke="#704020" />
              <path d="M5 23L8 20M9 23L17 15" stroke="#6020a0" />
            </svg>
          </RBtn>
        </Cell>
        <Cell className="ml-[9px]" shift="-ml-[2px]">
          <RBtn className="w-[53px] border-[#004000] bg-[#008000] text-white">Start</RBtn>
        </Cell>
        <Cell led="red" className="ml-[5px]">
          <RBtn className="w-[53px] border-[#800000] bg-[#ff0000] text-white">Stop</RBtn>
        </Cell>
        <Cell led="on" className="ml-[13px]" shift="mr-0.5">
          <RBtn className="w-[59px] bg-[#cbb998] text-[13px] font-bold text-black">자동</RBtn>
        </Cell>
        <Cell led="none" className="ml-[19px]">
          <RBtn className="w-[65px] bg-[#ff8000] text-black">Reset</RBtn>
        </Cell>
      </div>
    </div>
  </div>
);

/* ---------- status bar ---------- */

const STATUS = [
  ["READY", "bg-[#00ff00] text-black"],
  ["비상정지", "bg-black text-[#8c8c8c]"],
  ["알람", "bg-black text-[#8c8c8c]"],
  ["단선", "bg-black text-[#8c8c8c]"],
  ["접촉", "bg-black text-[#8c8c8c]"],
  ["자동", "bg-[#ffff00] text-black"],
  ["작업중", "bg-[#00ff00] text-black"],
  ["M코드 정지", "bg-black text-[#8c8c8c]"],
  ["작업종료", "bg-black text-[#8c8c8c]"],
  ["축-회전", "bg-[#ff0000] text-black"],
  ["정전복귀", "bg-black text-[#8c8c8c]"],
  ["", "bg-black"],
];

const StatusBar = () => (
  <div className="flex h-[30px] shrink-0 items-center bg-[#808080]">
    <span className="ml-[6px] h-[15px] w-[15px] rounded-full border border-black bg-[#008000]" />
    <div className="ml-1 flex gap-[2px] font-['Noto_Sans_CJK_KR',sans-serif] text-[13px] font-bold leading-[19px] tracking-[0.5px]">
      {STATUS.map(([label, cls], i) => (
        <div key={i} className={clsx("h-[21px] w-[80.200px] whitespace-nowrap text-center", cls)}>
          {label}
        </div>
      ))}
    </div>
  </div>
);

/* ---------- sponsored session dialog ---------- */

const TvLogo = ({ size }) => (
  <svg width={size} height={size} viewBox="0 0 54 54">
    <defs>
      <linearGradient id="tvg" x1="0" y1="1" x2="1" y2="0">
        <stop offset="0" stopColor="#0a84f0" />
        <stop offset="1" stopColor="#08b4fa" />
      </linearGradient>
    </defs>
    <rect width="54" height="54" rx="2" fill="url(#tvg)" />
    <circle cx="27" cy="27" r="22" fill="#fff" />
    <path d="M7 27L19 19.500L17.500 24.500H36.500L35 19.500L47 27L35 34.500L36.500 29.500H17.500L19 34.500Z" fill="#2088ee" />
  </svg>
);

const DialogBtn = ({ className, children }) => (
  <div
    className={clsx(
      "flex h-[21px] w-[127px] items-center justify-center whitespace-nowrap rounded-[3px] border bg-[linear-gradient(#f2f2f2,#ebebeb_50%,#dddddd_50%,#cfcfcf)]",
      className
    )}
  >
    {children}
  </div>
);

const Dialog = () => (
  <div className="absolute left-[261px] top-[295px] flex h-[177px] w-[501px] flex-col rounded-t-[6px] border border-b-[#28b8d8] border-l-[#202428] border-r-[#38c0e0] border-t-[#202428] bg-[#b9d1ea] px-[7px] pb-[6px] font-['Noto_Sans','Noto_Sans_CJK_KR',sans-serif] text-[12px] text-black shadow-[1px_1px_0_#101418,inset_1px_1px_0_#e4eef8]">
    <div className="-mx-[6px] mt-px flex h-[28px] shrink-0 items-center rounded-t-[5px] bg-gradient-to-b from-[#98b3d1] to-[#b9d1ea] pl-2 pr-[8px]">
      <TvLogo size={16} />
      <span className="ml-[4px] grow pt-1 leading-[26px] tracking-[0.5px]">후원 세션</span>
      <span className="mt-1 flex h-[17px] w-[31px] items-center justify-center rounded-[2px] border border-[#4c1818] bg-[linear-gradient(#e0a090,#d07868_50%,#b83820_50%,#d87058)] shadow-[inset_0_0_0_1px_#e8b0a4]">
        <svg width="12" height="10" viewBox="0 0 12 10">
          <path d="M2.500 1.500L9.500 8.500M9.500 1.500L2.500 8.500" stroke="#504048" strokeWidth="4" />
          <path d="M2.500 1.500L9.500 8.500M9.500 1.500L2.500 8.500" stroke="#fff" strokeWidth="2.400" />
        </svg>
      </span>
    </div>
    <div className="flex h-[92px] shrink-0 bg-white">
      <div className="ml-[10px] mt-[12px]">
        <TvLogo size={54} />
      </div>
      <div className="ml-[17px] mt-[12px] whitespace-nowrap text-[12px] leading-[13px] tracking-[0.5px]">
        <p><span className="text-[11px] tracking-[-0.05px]">www.teamviewer.com</span>에서 후원하는 무료 세션입니다.</p>
        <p>개인적 용도의 <span className="text-[11px] tracking-[-0.2px]">TeamViewer</span> 세션은 무료입니다.</p>
        <p className="mt-[13px]">감사합니다!</p>
      </div>
    </div>
    <div className="flex grow items-start justify-end gap-[7px] border-t border-[#c8c8c8] bg-[#f5f7fa] pr-4 pt-[15px] leading-[18px] tracking-[0.6px]">
      <DialogBtn className="border-[#707070] shadow-[inset_0_0_0_1px_#fbfbfb]">저희를 평가해 주세요.</DialogBtn>
      <DialogBtn className="border-[#707070] shadow-[inset_0_0_0_1px_#fbfbfb]">라이선스 구입</DialogBtn>
      <DialogBtn className="border-[#3c7fb1] text-[11px] tracking-[-0.2px] shadow-[inset_0_0_0_1px_#40d0f4]">OK</DialogBtn>
    </div>
  </div>
);

export default function App() {
  return (
    <div className="relative h-[768px] w-[1024px] overflow-hidden bg-[linear-gradient(90deg,#10b0e8_0,#10b0e8_50%,#0a5cb8_50%)] font-['Liberation_Sans','Noto_Sans_CJK_KR',sans-serif]">
      <div className="h-1 bg-[#0550a4]" />
      <div className="ml-px flex h-[761px] w-[1022px] flex-col rounded-t-[6px] border border-[#3c4450] bg-[#dce8f2] px-[2px]">
        <TitleBar />
        <MenuBar />
        <TabBar />
        <Heading />
        <div className="flex h-[424px] shrink-0">
          <LeftPanel />
          <Middle />
          <Viewer />
        </div>
        <Electric />
        <div className="h-[17px] shrink-0 bg-[#54acce] pl-3 font-['Noto_Sans',sans-serif] text-[11px] font-bold leading-[16px] text-white">Remote</div>
        <Remote />
        <StatusBar />
      </div>
      <div className="flex h-[3px] border-b border-[#50607a] bg-[#c8d6ea]">
        <div className="ml-[820px] grow bg-[#0a64c8]" />
      </div>
      <Dialog />
      <div className="absolute left-[1005px] top-[756px] h-[14px] w-[22px] rounded-tl-[3px] border border-[#303840] bg-[#a4bcd8] shadow-[inset_1px_1px_0_#f0f4fa]" />
    </div>
  );
}
